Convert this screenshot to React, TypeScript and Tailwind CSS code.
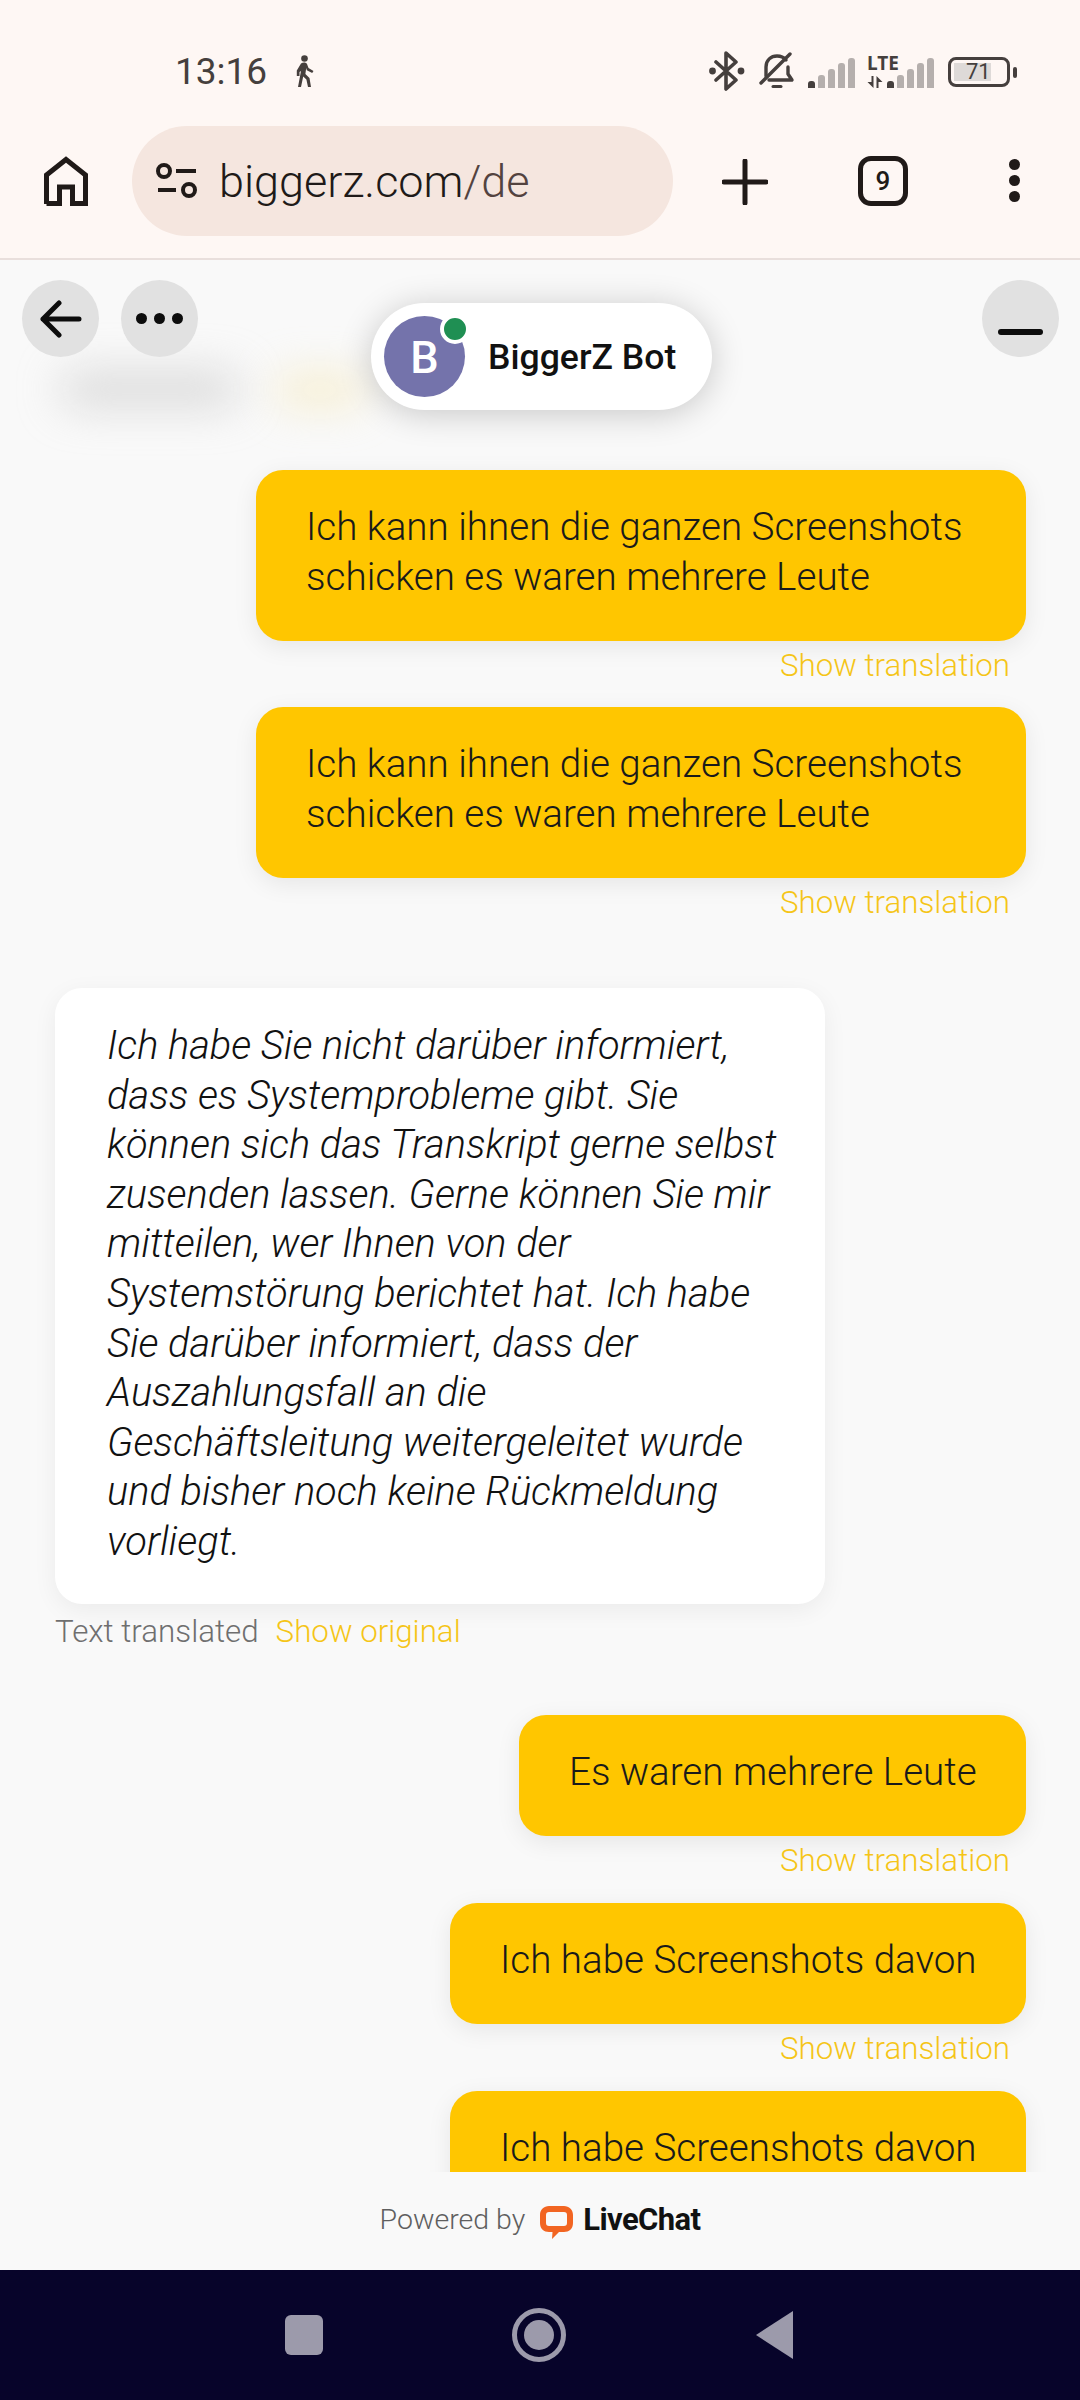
import React from "react";

const FONT = "font-['Roboto',sans-serif]";

function Bluetooth() {
  return (
    <svg width="36" height="40" viewBox="0 0 36 40" fill="none" stroke="#453f3d" strokeWidth="3.6" strokeLinejoin="round" strokeLinecap="round">
      <path d="M7 11 L27 29 L17 38 L17 2 L27 11 L7 29" />
      <circle cx="3.5" cy="20" r="1.6" fill="#453f3d" />
      <circle cx="32" cy="20" r="1.6" fill="#453f3d" />
    </svg>
  );
}

function BellOff() {
  return (
    <svg width="36" height="38" viewBox="0 0 36 38" fill="none" stroke="#453f3d" strokeWidth="3.4" strokeLinecap="round" strokeLinejoin="round">
      <path d="M7 24 V15 C7 8 12 4 18 4 C22 4 25 5.5 27 8" />
      <path d="M29 15 V22 L33 28 H10" />
      <path d="M2 31 L31 2" />
      <path d="M14 34.5 H22" strokeWidth="3" />
    </svg>
  );
}

function SignalBars() {
  const heights = [7, 13, 19, 25, 30];
  return (
    <div className="flex items-end gap-[3px] h-[30px]">
      {heights.map((h, i) => (
        <div
          key={i}
          className={i === 0 ? "w-[7px] bg-[#453f3d] rounded-t-[3px]" : "w-[7px] bg-[#b5afad] rounded-t-[3px]"}
          style={{ height: h }}
        />
      ))}
    </div>
  );
}

function StatusBar() {
  return (
    <div className="h-[126px] relative">
      <div className="flex items-center h-[70px] mt-[36px] pl-[175px] pr-[63px]">
        <span className="text-[37px] leading-none text-[#453f3d]">13:16</span>
        <svg className="ml-[28px]" width="20" height="32" viewBox="0 0 20 32" fill="#453f3d">
          <circle cx="9.5" cy="3.5" r="3.3" />
          <path d="M6 8.5 C8 7 11 7 12 9 L13.5 13 L18.5 16 L17.2 18 L11.8 15.2 L11.2 13 L10.4 19 L14.5 23 L16 32 H13 L11.4 24.6 L8.2 21.4 L6 32 H3 L6 16 L4.5 17 V21 H1.8 V15.4 Z" />
        </svg>
        <div className="flex items-center ml-auto">
          <Bluetooth />
          <div className="ml-[14px]"><BellOff /></div>
          <div className="ml-[13px] mt-[4px]"><SignalBars /></div>
          <div className="ml-[12px] flex flex-col w-[34px] relative">
            <span className="text-[19px] leading-[18px] font-bold text-[#453f3d] font-['Noto_Sans',sans-serif]">LTE</span>
            <svg className="mt-[4px]" width="16" height="12" viewBox="0 0 16 12" fill="#453f3d">
              <path d="M6.5 0 V12 L0.5 6 H4.5 V0 Z" />
              <path d="M9.5 12 V0 L15.5 6 H11.5 V12 Z" />
            </svg>
          </div>
          <div className="ml-[-14px] mt-[4px]"><SignalBars /></div>
          <div className="ml-[14px] flex items-center mt-[2px]">
            <div className="w-[62px] h-[30px] border-[3px] border-[#453f3d] rounded-[8px] relative overflow-hidden flex items-center">
              <div className="absolute left-[3px] top-[3px] bottom-[3px] w-[37px] bg-[#dedad8]" />
              <span className="relative ml-[15px] text-[22px] leading-none text-[#453f3d]">71</span>
            </div>
            <div className="ml-[3px] w-[4px] h-[11px] rounded-[2px] bg-[#453f3d]" />
          </div>
        </div>
      </div>
    </div>
  );
}

function Toolbar() {
  return (
    <div className="h-[134px] border-b-2 border-[#e9dfdc] flex items-start">
      <svg className="ml-[43px] mt-[30px]" width="46" height="50" viewBox="0 0 46 50" fill="none" stroke="#201a18" strokeWidth="5">
        <path d="M3.5 48 V19 L23 3.5 L42.5 19 V47.5 H29.5 V31 H16.5 V47.5 H3.5" strokeLinejoin="miter" />
      </svg>
      <div className="ml-[43px] w-[541px] h-[110px] rounded-full bg-[#f5e6df] flex items-center pl-[24px]">
        <svg width="42" height="36" viewBox="0 0 42 36" fill="none" stroke="#201a18" strokeWidth="4">
          <circle cx="8" cy="8" r="6" />
          <path d="M20 8 H40" />
          <path d="M2 27 H20" />
          <circle cx="33" cy="27" r="6" />
        </svg>
        <span className="ml-[21px] text-[45px] leading-none text-[#201a18] [font-weight:350]">
          biggerz.com<span className="text-[#53433f]">/de</span>
        </span>
      </div>
      <svg className="ml-[49px] mt-[33px]" width="46" height="46" viewBox="0 0 46 46" stroke="#201a18" strokeWidth="5" strokeLinecap="round">
        <path d="M23 2 V44 M2 23 H44" />
      </svg>
      <div className="ml-[90px] mt-[30px] w-[50px] h-[50px] border-[5px] border-[#201a18] rounded-[13px] flex items-center justify-center text-[26px] font-medium text-[#201a18]">
        9
      </div>
      <div className="ml-[101px] mt-[33px] flex flex-col gap-[5px]">
        <div className="w-[11px] h-[11px] rounded-full bg-[#201a18]" />
        <div className="w-[11px] h-[11px] rounded-full bg-[#201a18]" />
        <div className="w-[11px] h-[11px] rounded-full bg-[#201a18]" />
      </div>
    </div>
  );
}

function RoundButton({ children }: { children: React.ReactNode }) {
  return <div className="w-[77px] h-[77px] rounded-full bg-[#e1e1e1] flex items-center justify-center">{children}</div>;
}

function ChatHeader() {
  return (
    <>
      <div className="absolute left-[22px] top-[20px] flex gap-[22px] z-10">
        <RoundButton>
          <svg width="42" height="38" viewBox="0 0 42 38" fill="none" stroke="#0c0c0c" strokeWidth="5" strokeLinecap="round" strokeLinejoin="round">
            <path d="M39 19 H3 M19 3 L3 19 L19 35" />
          </svg>
        </RoundButton>
        <RoundButton>
          <div className="flex gap-[7px]">
            <div className="w-[11px] h-[11px] rounded-full bg-[#0c0c0c]" />
            <div className="w-[11px] h-[11px] rounded-full bg-[#0c0c0c]" />
            <div className="w-[11px] h-[11px] rounded-full bg-[#0c0c0c]" />
          </div>
        </RoundButton>
      </div>
      <div className="absolute right-[21px] top-[20px] z-10">
        <RoundButton>
          <div className="w-[45px] h-[6px] rounded-full bg-[#0c0c0c] mt-[27px]" />
        </RoundButton>
      </div>
      <div className="absolute left-[60px] top-[112px] w-[180px] h-[34px] rounded-full bg-[#b9b9b9]/50 blur-[22px]" />
      <div className="absolute left-[275px] top-[112px] w-[90px] h-[36px] rounded-full bg-[#f6e6ae]/50 blur-[20px]" />
      <div className="absolute left-[371px] top-[43px] w-[341px] h-[107px] rounded-full bg-white shadow-[0_4px_34px_rgba(0,0,0,0.2)] flex items-center pl-[13px] z-10">
        <div className="relative w-[81px] h-[81px] rounded-full bg-[#7473ab] flex items-center justify-center text-white text-[45px] font-medium pt-[2px]">
          B
          <div className="absolute left-[56px] top-[-2px] w-[30px] h-[30px] rounded-full bg-[#1f8f53] border-[4px] border-white" />
        </div>
        <span className="ml-[23px] mt-[3px] text-[35.6px] font-medium text-[#111111]">BiggerZ Bot</span>
      </div>
    </>
  );
}

function Outgoing({
  text,
  width,
  gap = "mt-[21px]",
  showLink = true,
}: {
  text: React.ReactNode;
  width: string;
  gap?: string;
  showLink?: boolean;
}) {
  return (
    <div className={`flex flex-col items-end ${gap}`}>
      <div className={`${width} bg-[#ffc600] rounded-[27px] pl-[50px] pr-[30px] pt-[32px] pb-[39px] text-[38.6px] leading-[50px] font-light text-[#1a1a1a] shadow-[0_6px_24px_rgba(0,0,0,0.08)]`}>
        {text}
      </div>
      {showLink && (
        <span className="mr-[16px] mt-[5px] text-[31.3px] leading-[40px] font-light text-[#f5c518]">Show translation</span>
      )}
    </div>
  );
}

function Incoming() {
  return (
    <div className="mt-[65px] pl-[55px]">
      <div className="w-[770px] bg-white rounded-[27px] pl-[52px] pr-[20px] pt-[33px] pb-[37px] text-[39.8px] leading-[49.6px] font-light italic text-[#111111] shadow-[0_6px_24px_rgba(0,0,0,0.06)]">
        Ich habe Sie nicht darüber informiert,<br />
        dass es Systemprobleme gibt. Sie<br />
        können sich das Transkript gerne selbst<br />
        zusenden lassen. Gerne können Sie mir<br />
        mitteilen, wer Ihnen von der<br />
        Systemstörung berichtet hat. Ich habe<br />
        Sie darüber informiert, dass der<br />
        Auszahlungsfall an die<br />
        Geschäftsleitung weitergeleitet wurde<br />
        und bisher noch keine Rückmeldung<br />
        vorliegt.
      </div>
      <div className="mt-[8px] mb-[-2px] flex gap-[17px] text-[31.3px] leading-[40px] font-light">
        <span className="text-[#6f6f6f]">Text translated</span>
        <span className="text-[#f5c518]">Show original</span>
      </div>
    </div>
  );
}

function Footer() {
  return (
    <div className="h-[98px] flex items-center justify-center pb-[2px]">
      <span className="text-[28.5px] font-light text-[#5f5f5f]">Powered by</span>
      <svg className="ml-[15px] mt-[4px]" width="33" height="33" viewBox="0 0 33 33">
        <path
          fill="#f26522"
          d="M9 0 H24 C29 0 33 3.5 33 9 V17 C33 23 29 26 24 26 H19 L12 33 L12.5 26 H9 C4 26 0 23 0 17 V9 C0 3.5 4 0 9 0 Z M9 6 C7 6 6 7 6 9 V17 C6 19 7 20 9 20 H24 C26 20 27 19 27 17 V9 C27 7 26 6 24 6 Z"
          fillRule="evenodd"
        />
      </svg>
      <span className="ml-[10px] text-[31px] font-bold text-[#111111] tracking-[-0.6px]">LiveChat</span>
    </div>
  );
}

function NavBar() {
  return (
    <div className="h-[130px] bg-[#07042a] flex items-center pl-[285px]">
      <div className="w-[38px] h-[40px] rounded-[6px] bg-[#9c9aab]" />
      <div className="ml-[189px] w-[54px] h-[54px] rounded-full border-[5px] border-[#9c9aab] flex items-center justify-center">
        <div className="w-[30px] h-[30px] rounded-full bg-[#9c9aab]" />
      </div>
      <svg className="ml-[189px]" width="40" height="50" viewBox="0 0 40 50" fill="#9c9aab">
        <path d="M38 1 V49 L1 25 Z" strokeLinejoin="round" />
      </svg>
    </div>
  );
}

export default function App() {
  return (
    <div className={`w-[1080px] h-[2400px] flex flex-col bg-[#fef7f4] ${FONT} overflow-hidden`}>
      <StatusBar />
      <Toolbar />
      <div className="flex-1 relative bg-[#f9f9f9] flex flex-col min-h-0">
        <ChatHeader />
        <div className="flex-1 overflow-hidden min-h-0 pt-[210px] pr-[54px]">
          <Outgoing
            gap=""
            width="w-[770px]"
            text={<>Ich kann ihnen die ganzen Screenshots<br />schicken es waren mehrere Leute</>}
          />
          <Outgoing
            width="w-[770px]"
            text={<>Ich kann ihnen die ganzen Screenshots<br />schicken es waren mehrere Leute</>}
          />
          <Incoming />
          <Outgoing gap="mt-[65px]" width="w-[507px]" text="Es waren mehrere Leute" />
          <Outgoing gap="mt-[22px]" width="w-[576px]" text="Ich habe Screenshots davon" />
          <Outgoing gap="mt-[22px]" width="w-[576px]" text="Ich habe Screenshots davon" showLink={false} />
        </div>
        <Footer />
      </div>
      <NavBar />
    </div>
  );
}
